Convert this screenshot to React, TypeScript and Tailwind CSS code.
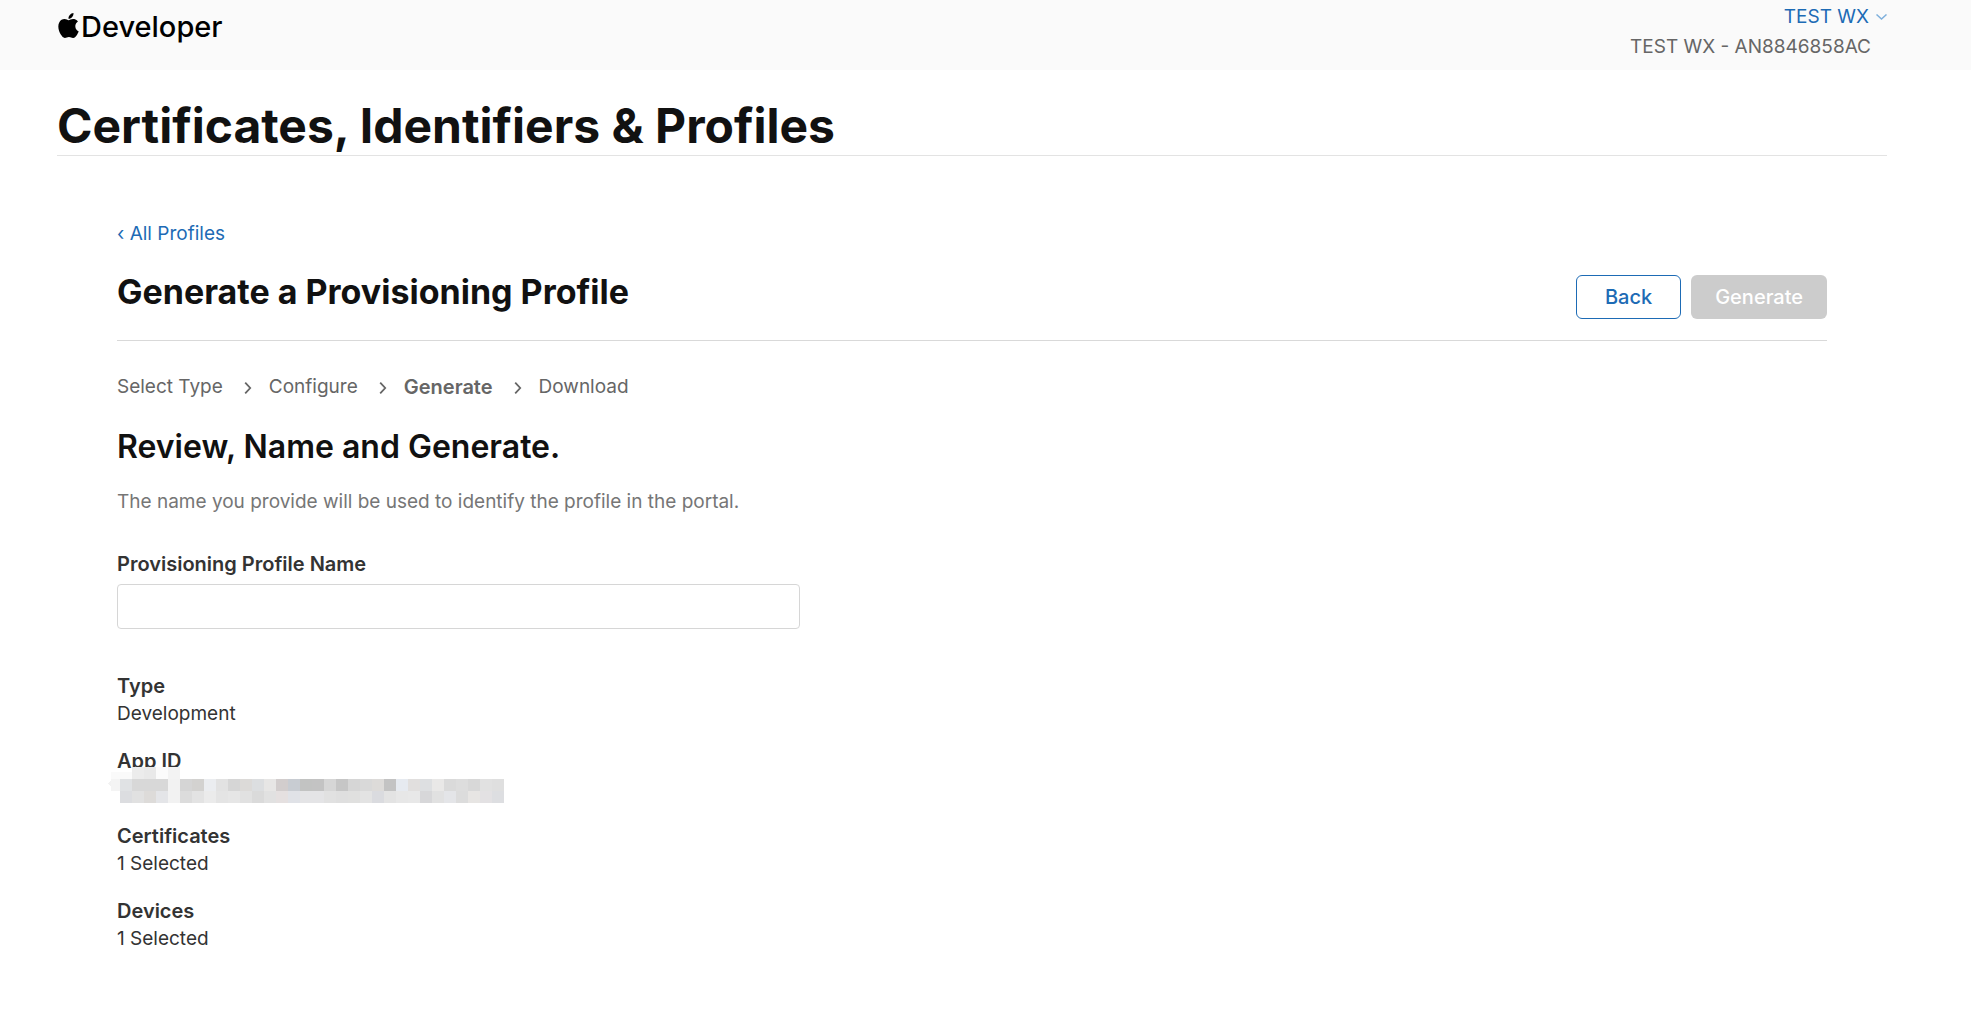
import { useState } from "react";
import { SiApple } from "react-icons/si";

const steps = ["Select Type", "Configure", "Generate", "Download"];
const currentStep = "Generate";

const CELL = 12;

// Full-strength rows of the redacted app id, one colour per cell
const maskRows = [
  ["#e0e2e4", "#d8d8d8", "#d8d8d8", "#d8d8d8", "#f2f2f2", "#d5d5d5", "#d3d2d0", "#ebedf0", "#e2e2e2", "#d6d6d6", "#dcdad8", "#dcdee0", "#e7e6e5", "#d2cdcd", "#c8ccd2", "#c2c3c2", "#c3c3c3", "#d6d6d6", "#c6c6c6", "#d6d6d6", "#d9d9d9", "#dddbd9", "#c3c3c3", "#e6eaf0", "#e1dfde", "#dddfe1", "#e9e8e7", "#dadada", "#dddddd", "#d8d8d8", "#e1e1e1", "#dfdfdf"],
  ["#dcdde0", "#e1e1e1", "#dddbd9", "#e4e5e8", "#f2f2f2", "#dcdcdc", "#e3e3e3", "#ebebeb", "#e4e4e4", "#e6e6e6", "#e1e1e1", "#dadada", "#e1e1e1", "#e5e0e0", "#e0e2e7", "#e4e4e6", "#e4e4e6", "#e1e1e1", "#dfdfdf", "#e0e0df", "#e3e3e3", "#dadbdf", "#e3e3e3", "#e7e7e7", "#e8e8e8", "#d7d7d9", "#e1e1e1", "#e4e5e8", "#dcdcdc", "#e7e5e3", "#e3e1e3", "#dddee1"],
];

function StepChevron() {
  return (
    <svg width="8" height="12" viewBox="0 0 8 12" fill="none" stroke="#666" strokeWidth="1.8" aria-hidden="true">
      <path d="M1.2 .6 6.2 6 1.2 11.4" />
    </svg>
  );
}

function MaskedValue() {
  return (
    <svg className="absolute -left-3 top-5" width="402" height="36" viewBox="0 0 402 36" shapeRendering="crispEdges" aria-hidden="true">
      <rect x="6" y="5" width="69" height="7" fill="#fafafa" />
      <rect x="27" y="0" width="12" height="12" fill="#ececec" />
      <rect x="39" y="0" width="12" height="12" fill="#e9e9e9" />
      <rect x="51" y="0" width="12" height="12" fill="#fbfbfb" />
      <rect x="63" y="0" width="12" height="12" fill="#f3f3f3" />
      <path d="M3 16 6 13V20Z" fill="#f2f2f2" />
      <rect x="6" y="12" width="9" height="12" fill="#f4f4f4" />
      {maskRows.map((row, r) =>
        row.map((fill, c) => (
          <rect key={`${r}-${c}`} x={15 + c * CELL} y={12 + r * CELL} width={CELL} height={CELL} fill={fill} />
        ))
      )}
    </svg>
  );
}

function Detail({ label, children }: { label: string; children?: React.ReactNode }) {
  return (
    <div className="relative leading-7">
      <dt className="text-xl font-semibold leading-7">{label}</dt>
      <dd className="min-h-7">{children}</dd>
    </div>
  );
}

export default function App() {
  const [name, setName] = useState("");

  return (
    <div className="min-h-screen bg-white font-['Inter',sans-serif] text-[19px] text-[#333]">
      <header className="flex justify-between bg-[#fafafa] pb-2 pl-14 pr-[84px]">
        <a href="#" className="flex h-[54px] items-center text-[29px] font-medium text-black">
          <SiApple size={25} className="mb-1" aria-hidden="true" />
          <span>Developer</span>
        </a>
        <div className="flex flex-col items-end pt-[2px] leading-[30px]">
          <button type="button" className="flex items-center gap-[7px] text-[#1d6bb5]">
            TEST WX
            <svg width="11" height="6" viewBox="0 0 11 6" fill="none" stroke="#7fb0dc" strokeWidth="1.5" aria-hidden="true">
              <path d="M.5 .5 5.5 5 10.5 .5" />
            </svg>
          </button>
          <span className="pr-4 text-[#666]">TEST WX - AN8846858AC</span>
        </div>
      </header>

      <div className="pl-[57px] pr-[84px]">
        <h1 className="border-b border-[#e3e3e3] pt-[27px] text-[48px] font-bold leading-[58px] text-[#111]">
          Certificates, Identifiers &amp; Profiles
        </h1>

        <main className="px-[60px] pt-16">
          <a href="#" className="inline-block leading-7 text-[#1d6bb5]">‹ All Profiles</a>

          <div className="flex items-start justify-between border-b border-[#d9d9d9] pb-[21px] pt-6">
            <h2 className="text-[34px] font-bold leading-[38px] text-[#111]">Generate a Provisioning Profile</h2>
            <div className="flex gap-[10px] pt-[2px] text-xl font-medium">
              <button type="button" className="h-11 rounded-md border border-[#1d6bb5] px-7 text-[#1d6bb5]">Back</button>
              <button type="button" disabled className="h-11 rounded-md bg-[#ccc] px-6 text-white">Generate</button>
            </div>
          </div>

          <ol className="flex items-center pt-8 leading-7 text-[#666]">
            {steps.map((step, i) => (
              <li key={step} className="flex items-center">
                {i > 0 && <span className="pl-[21px] pr-[17px] pt-[2px]"><StepChevron /></span>}
                <span className={step === currentStep ? "text-xl font-semibold leading-7" : ""}>{step}</span>
              </li>
            ))}
          </ol>

          <h3 className="pt-[26px] text-[32px] font-semibold leading-10 text-[#111]">Review, Name and Generate.</h3>
          <p className="pt-[21px] leading-7 text-[#767676]">
            The name you provide will be used to identify the profile in the portal.
          </p>

          <label htmlFor="profile-name" className="block pt-[34px] text-xl font-semibold leading-7">Provisioning Profile Name</label>
          <input
            id="profile-name"
            type="text"
            value={name}
            onChange={e => setName(e.target.value)}
            className="mt-[6px] h-[45px] w-full max-w-[683px] rounded border border-[#d6d6d6] px-4"
          />

          <dl className="space-y-[19px] pb-10 pt-[43px]">
            <Detail label="Type">Development</Detail>
            <Detail label="App ID"><MaskedValue /></Detail>
            <Detail label="Certificates">1 Selected</Detail>
            <Detail label="Devices">1 Selected</Detail>
          </dl>
        </main>
      </div>
    </div>
  );
}
